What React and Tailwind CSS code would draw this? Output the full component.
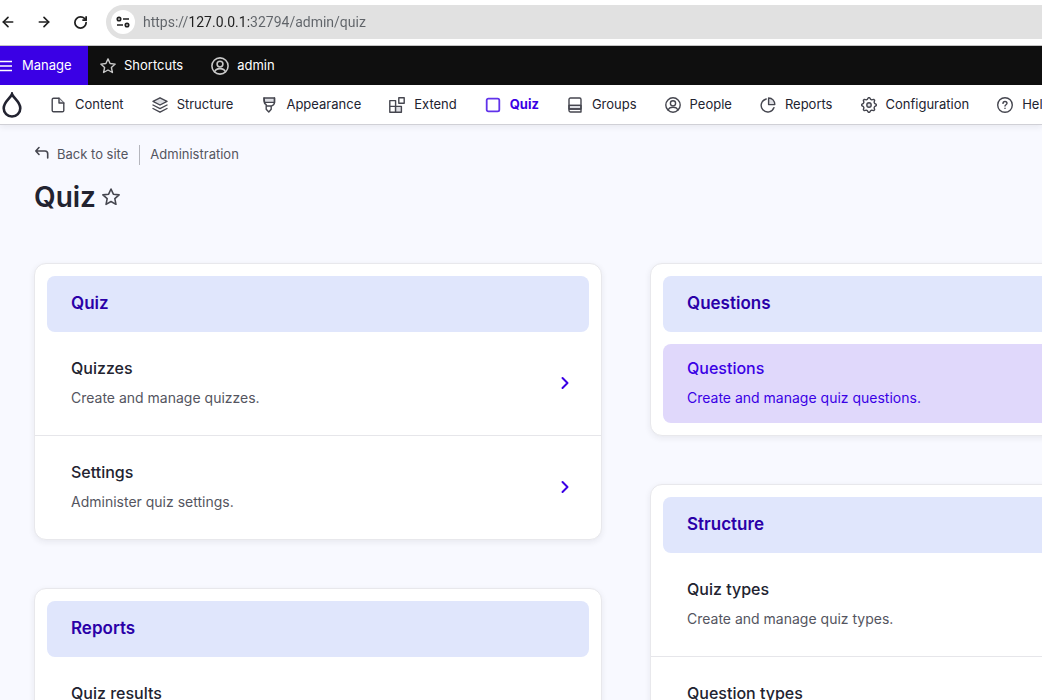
import { ArrowLeft, ArrowRight, ChevronRight, RotateCw } from "lucide-react"

const Icon = ({ size = "size-4", children }) => (
    <svg
        viewBox="0 0 16 16"
        className={`${size} shrink-0`}
        fill="none"
        stroke="currentColor"
        strokeWidth="1.4"
        strokeLinecap="round"
        strokeLinejoin="round"
        aria-hidden="true"
    >
        {children}
    </svg>
)

const StarShape = () => (
    <path d="M8 .9l2.1 4.6 5.1.6-3.8 3.4 1 5L8 12l-4.4 2.5 1-5L.8 6.1l5.1-.6z" />
)

const PersonShape = () => (
    <>
        <circle cx="8" cy="8" r="7.2" />
        <circle cx="8" cy="6.3" r="2.6" />
        <path d="M3.2 13.2c.6-2 2.2-2.9 4.8-2.9s4.2.9 4.8 2.9" />
    </>
)

// outline of a gear with eight teeth
const gearPoints = Array.from({ length: 32 }, (_, i) => {
    const radius = i % 4 < 2 ? 7.3 : 5.8
    const angle = ((i - 0.5) * Math.PI) / 16
    return `${8 + radius * Math.sin(angle)},${8 - radius * Math.cos(angle)}`
}).join(" ")

const icons = {
    content: (
        <>
            <path d="M9 1.2H3.6c-.8 0-1.4.6-1.4 1.4v10.8c0 .8.6 1.4 1.4 1.4h8.8c.8 0 1.4-.6 1.4-1.4V6z" />
            <path d="M9 1.2V6h4.8" fill="#dedfe4" />
        </>
    ),
    structure: (
        <>
            <path d="M8 .8L15 4.4 8 8 1 4.4z" fill="#dedfe4" />
            <path d="M1 8l7 3.6L15 8M1 11.5l7 3.7 7-3.7" />
        </>
    ),
    appearance: (
        <>
            <path d="M3 1h10.500v4.400H3.600z" fill="#dedfe4" />
            <path d="M3 1v3c0 1.800.8 3 2.200 3.700v4.500l2.600 2.800 2.400-2.800V9.200c1.800-.8 3.300-1.800 3.300-3.800V1M5.400 9h4.400" />
        </>
    ),
    extend: (
        <>
            <path d="M.8 3.6h5.8v5.8H.8zM.8 9.4h5.8v5.8H.8z" />
            <path d="M6.6 9.4h5.8v5.8H6.6z" fill="#dedfe4" />
            <path d="M9.8.8h5.4v5.4H9.8z" />
        </>
    ),
    quiz: <rect x="1.7" y="1.7" width="12.6" height="12.6" rx="1.6" strokeWidth="1.8" />,
    groups: (
        <>
            <path d="M2 8.400h12v3.600H2z" fill="#dedfe4" />
            <path d="M3.400 1h9.200c.8 0 1.400.6 1.400 1.400V15H3.400c-.8 0-1.400-.6-1.400-1.400V2.400C2 1.600 2.600 1 3.400 1zM2 8.400h12M2 12h12" />
        </>
    ),
    people: <PersonShape />,
    reports: (
        <>
            <path d="M6.2 2A6.6 6.6 0 1 0 14 10.6" />
            <path d="M8.6 1v6.6h6.2C14.8 3.8 12.2 1 8.6 1z" fill="#dedfe4" />
        </>
    ),
    configuration: (
        <>
            <polygon points={gearPoints} />
            <circle cx="8" cy="8" r="2.2" fill="#dedfe4" />
        </>
    ),
    help: (
        <>
            <circle cx="8" cy="8" r="7.3" />
            <path d="M6 6.4C6 5.2 6.9 4.5 8 4.5s2 .7 2 1.8C10 7.700 8 7.700 8 9M8 11.300v.1" />
        </>
    ),
}

const menu = [
    { icon: "content", label: "Content" },
    { icon: "structure", label: "Structure" },
    { icon: "appearance", label: "Appearance" },
    { icon: "extend", label: "Extend" },
    { icon: "quiz", label: "Quiz", active: true },
    { icon: "groups", label: "Groups" },
    { icon: "people", label: "People" },
    { icon: "reports", label: "Reports" },
    { icon: "configuration", label: "Configuration" },
    { icon: "help", label: "Help" },
]

const leftPanels = [
    {
        title: "Quiz",
        links: [
            { title: "Quizzes", text: "Create and manage quizzes." },
            { title: "Settings", text: "Administer quiz settings." },
        ],
    },
    {
        title: "Reports",
        links: [{ title: "Quiz results", text: "View results." }],
    },
]

const rightPanels = [
    {
        title: "Questions",
        links: [{ title: "Questions", text: "Create and manage quiz questions.", highlighted: true }],
    },
    {
        title: "Structure",
        links: [
            { title: "Quiz types", text: "Create and manage quiz types." },
            { title: "Question types", text: "Create and manage question types." },
        ],
    },
]

const BrowserBar = () => (
    <div className="flex h-[46px] items-center border-b border-[#c4c4c4] bg-white pb-px text-[#1f1f1f]">
        <button aria-label="Back" className="flex w-4 justify-center">
            <ArrowLeft className="size-4 shrink-0" strokeWidth={2.5} />
        </button>
        <button aria-label="Forward" className="ml-5 flex w-4 justify-center">
            <ArrowRight className="size-4 shrink-0" strokeWidth={2.5} />
        </button>
        <button aria-label="Reload" className="ml-5 flex w-4 justify-center">
            <RotateCw className="size-[15px] shrink-0" strokeWidth={2.8} />
        </button>
        <div className="ml-[18px] flex h-[34px] flex-1 items-center rounded-l-full bg-[#e1e1e1] pl-[5px]">
            <button
                aria-label="Site information"
                className="flex size-6 items-center justify-center rounded-full bg-white"
            >
                <svg viewBox="0 0 14 12" className="h-3 w-[14px]" fill="none" stroke="currentColor" strokeWidth="1.7">
                    <circle cx="3" cy="3" r="1.7" />
                    <path d="M7 3h6M1 9h6" />
                    <circle cx="11" cy="9" r="1.7" />
                </svg>
            </button>
            <input
                aria-label="Address"
                defaultValue="https://127.0.0.1:32794/admin/quiz"
                className="ml-2 min-w-0 flex-1 bg-[linear-gradient(90deg,#5f6368_47px,#1f1f1f_47px,#1f1f1f_107px,#5f6368_107px)] bg-clip-text font-[Roboto,sans-serif] text-sm text-transparent outline-none"
            />
        </div>
    </div>
)

const Toolbar = () => (
    <div className="flex h-[39px] bg-[#0f0f0f] text-[13px] text-white">
        <button className="flex w-[88px] items-center gap-[10px] bg-[#3a00e5]">
            <svg viewBox="0 0 12 12" className="size-3" stroke="currentColor" strokeWidth="1.3" aria-hidden="true">
                <path d="M0 1.5h12M0 6h12M0 10.5h12" />
            </svg>
            Manage
        </button>
        <button className="flex items-center gap-2 pr-[14px] pl-3">
            <span className="text-[#c8c8c8]">
                <Icon>
                    <StarShape />
                </Icon>
            </span>
            Shortcuts
        </button>
        <button className="flex items-center gap-2 px-[14px]">
            <span className="text-[#c8c8c8]">
                <Icon size="size-[18px]">
                    <PersonShape />
                </Icon>
            </span>
            admin
        </button>
    </div>
)

const AdminMenu = () => (
    <nav className="flex h-10 items-center overflow-hidden border-b border-[#d0d0d6] bg-white shadow-[0_2px_6px_rgba(34,35,48,0.08)]">
        <a href="#home" aria-label="Home" className="mr-7 ml-[2px] shrink-0">
            <svg viewBox="0 0 20 26" className="h-[26px] w-5" fill="none" stroke="#222330" strokeWidth="2.6">
                <path d="M10 2.2C8.8 6 1.7 9.8 1.7 16.2a8.3 8.3 0 0 0 16.6 0C18.3 9.8 11.2 6 10 2.2z" />
            </svg>
        </a>
        <ul className="flex gap-7 text-[13px]">
            {menu.map((item) => (
                <li key={item.label}>
                    <a
                        href={`#${item.icon}`}
                        className={`flex items-center gap-[9px] ${
                            item.active ? "font-bold text-[#3a00e5]" : "text-[#222330]"
                        }`}
                    >
                        <span className={item.active ? "opacity-80" : "text-[#45464f]"}>
                            <Icon>{icons[item.icon]}</Icon>
                        </span>
                        {item.label}
                    </a>
                </li>
            ))}
        </ul>
    </nav>
)

const PanelLink = ({ link }) => (
    <li className="border-[#e6e6ea] p-3 not-last:border-b">
        <a
            href="#link"
            className={`flex h-[79px] items-center justify-between rounded-lg pr-[18px] pb-[2px] pl-6 ${
                link.highlighted ? "bg-[#e0d8fb]" : ""
            }`}
        >
            <span className="flex flex-col gap-[6px]">
                <span
                    className={`text-base leading-6 font-medium ${
                        link.highlighted ? "text-[#3a00e5]" : "text-[#222330]"
                    }`}
                >
                    {link.title}
                </span>
                <span
                    className={`text-sm leading-6 ${link.highlighted ? "text-[#3a00e5]" : "text-[#545560]"}`}
                >
                    {link.text}
                </span>
            </span>
            <ChevronRight className="-mr-1 size-5 text-[#3a00e5]" strokeWidth={2.4} />
        </a>
    </li>
)

const Panel = ({ panel }) => (
    <section className="rounded-xl border border-[#e8e8ec] bg-white shadow-[0_2px_6px_rgba(34,35,48,0.08)]">
        <h2 className="mx-3 mt-3 flex h-14 items-center rounded-lg bg-[#e0e6fc] px-6 text-[17px] font-semibold text-[#2a00a8]">
            {panel.title}
        </h2>
        <ul>
            {panel.links.map((link) => (
                <PanelLink key={link.title} link={link} />
            ))}
        </ul>
    </section>
)

const Column = ({ panels }) => (
    <div className="flex flex-col gap-12">
        {panels.map((panel) => (
            <Panel key={panel.title} panel={panel} />
        ))}
    </div>
)

const App = () => (
    <div className="h-screen overflow-hidden bg-[#f8f9ff] font-[Inter,sans-serif]">
        <BrowserBar />
        <Toolbar />
        <AdminMenu />
        <main className="min-w-[1252px] px-[34px] pt-5">
            <nav aria-label="Breadcrumb" className="flex h-5 items-center text-[13px] text-[#545560]">
                <a href="#site" className="flex items-center gap-2 pr-[11px]">
                    <svg
                        viewBox="0 0 15 14"
                        className="mb-1 h-[14px] w-[15px]"
                        fill="none"
                        stroke="#45464f"
                        strokeWidth="1.6"
                        strokeLinecap="round"
                        strokeLinejoin="round"
                    >
                        <path d="M5 1.5L1.8 5 5 8.5M1.8 5H11c1.7 0 2.7 1 2.7 2.7V12" />
                    </svg>
                    Back to site
                </a>
                <a href="#admin" className="border-l border-[#b5b6bd] pl-[10px]">
                    Administration
                </a>
            </nav>
            <div className="mt-[14px] flex items-center gap-[6px]">
                <h1 className="text-[28px] leading-9 font-semibold text-[#222330]">Quiz</h1>
                <button aria-label="Add to shortcuts" className="text-[#45464f]">
                    <Icon size="size-[18px]">
                        <StarShape />
                    </Icon>
                </button>
            </div>
            <div className="mt-12 grid grid-cols-2 items-start gap-12">
                <Column panels={leftPanels} />
                <Column panels={rightPanels} />
            </div>
        </main>
    </div>
)

export default App
